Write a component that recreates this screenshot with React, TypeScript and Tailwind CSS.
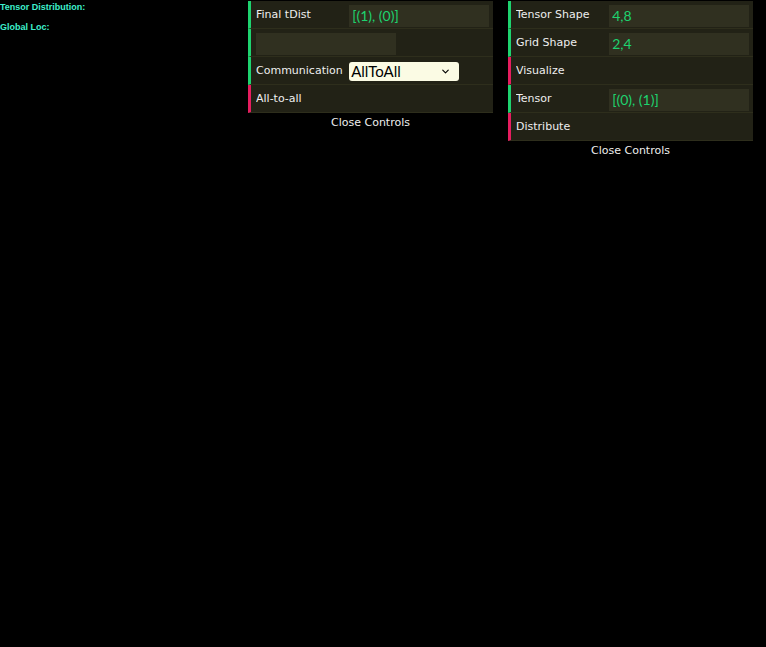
import { ChevronDown } from "lucide-react";

type Row =
  | { kind: "text"; label: string; value: string }
  | { kind: "blank" }
  | { kind: "select"; label: string; value: string }
  | { kind: "fn"; label: string };

function GuiRow({ row }: { row: Row }) {
  const border = row.kind === "fn" ? "border-l-[#e61d5f]" : "border-l-[#1ed36f]";
  return (
    <div
      className={`flex items-center h-[28px] pt-[2px] pl-[5px] pr-[4px] border-l-[3px] ${border} border-b border-b-[#2e2e1c] bg-[#222216]`}
    >
      {row.kind === "blank" ? (
        <div className="w-[140px] h-[22px] bg-[#303020]" />
      ) : (
        <>
          <div className="w-[40%] shrink-0 text-[11px] text-[#eeeeee] truncate">{row.label}</div>
          {row.kind === "text" && (
            <div
              className="flex-1 h-[22px] bg-[#303020] flex items-center pl-[3px] text-[14px] text-[#1ed36f]"
              style={{ fontFamily: "Lato, sans-serif" }}
            >
              {row.value}
            </div>
          )}
          {row.kind === "select" && (
            <div
              className="w-[110px] h-[19px] rounded-[3px] bg-[#fbfbe4] flex items-center justify-between pl-[2px] pr-[8px] text-[15px] text-black"
              style={{ fontFamily: "Lato, sans-serif" }}
            >
              <span>{row.value}</span>
              <ChevronDown size={11} strokeWidth={2.5} />
            </div>
          )}
        </>
      )}
    </div>
  );
}

function Panel({ rows }: { rows: Row[] }) {
  return (
    <div className="w-[245px] flex flex-col">
      {rows.map((r, i) => (
        <GuiRow key={i} row={r} />
      ))}
      <div className="h-[20px] flex items-center justify-center text-[11px] text-[#eeeeee]">
        Close Controls
      </div>
    </div>
  );
}

export default function App() {
  return (
    <div
      className="w-[766px] h-[647px] bg-black flex items-start"
      style={{ fontFamily: '"DejaVu Sans", sans-serif' }}
    >
      <div
        className="w-[248px] shrink-0 flex flex-col gap-[6px] pt-[1px] text-[9px] font-bold text-[#3ef0cc]"
        style={{ fontFamily: '"Liberation Sans", Arial, sans-serif' }}
      >
        <div>Tensor Distribution:</div>
        <div>Global Loc:</div>
      </div>
      <div className="flex items-start pt-[1px]">
        <Panel
          rows={[
            { kind: "text", label: "Final tDist", value: "[(1), (0)]" },
            { kind: "blank" },
            { kind: "select", label: "Communication", value: "AllToAll" },
            { kind: "fn", label: "All-to-all" },
          ]}
        />
        <div className="w-[15px] shrink-0" />
        <Panel
          rows={[
            { kind: "text", label: "Tensor Shape", value: "4,8" },
            { kind: "text", label: "Grid Shape", value: "2,4" },
            { kind: "fn", label: "Visualize" },
            { kind: "text", label: "Tensor", value: "[(0), (1)]" },
            { kind: "fn", label: "Distribute" },
          ]}
        />
      </div>
    </div>
  );
}
